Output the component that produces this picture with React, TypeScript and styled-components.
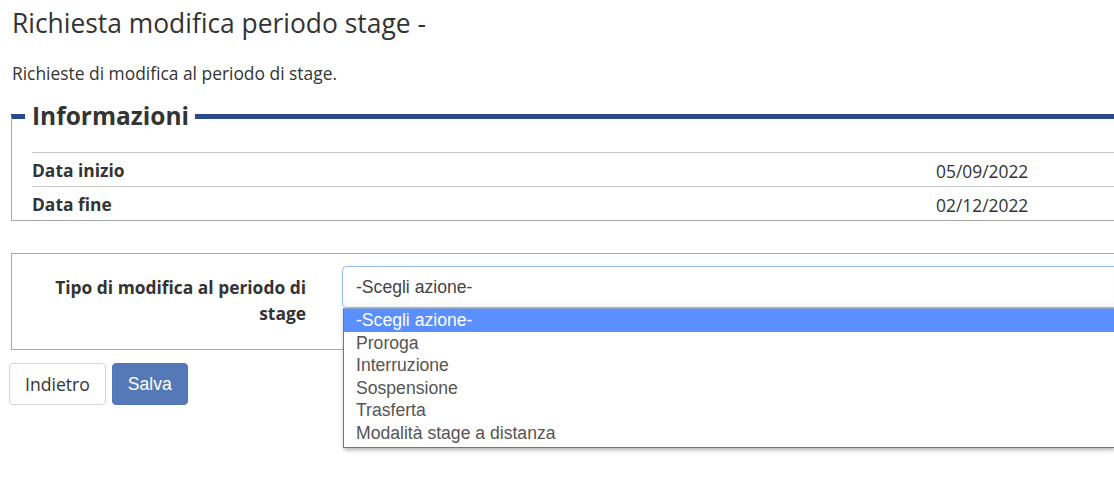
import React from 'react'
import styled, { createGlobalStyle } from 'styled-components'

const GlobalStyle = createGlobalStyle`
  html, body {
    margin: 0;
    padding: 0;
    background: #fff;
    overflow: hidden;
  }
  body {
    font-family: 'Open Sans', 'DejaVu Sans', sans-serif;
    color: #333;
  }
`

const Page = styled.div`
  width: 100%;
  min-height: 498px;
  padding: 0 0 0 11px;
  box-sizing: border-box;
`
const Title = styled.h1`
  margin: 0;
  padding: 5px 0 0 1px;
  font-size: 26.4px;
  font-weight: 400;
  line-height: 36px;
  color: #333;
`
const Intro = styled.p`
  margin: 20px 0 0 1px;
  font-size: 17.4px;
  line-height: 24px;
`
const InfoFieldset = styled.fieldset`
  margin: 16px 0 0;
  padding: 0 0 0 20px;
  border: 1px solid #a9a9a9;
  border-top: 5px solid #2b4a8b;
  border-right: none;
`
const InfoLegend = styled.legend`
  margin-left: -7px;
  padding: 0 6px 0 7px;
  font-size: 24.5px;
  font-weight: 700;
  line-height: 30px;
  color: #333;
`
const InfoTable = styled.div`
  margin-top: 21px;
`
const InfoRow = styled.div`
  display: grid;
  grid-template-columns: 904px 1fr;
  align-items: center;
  height: 33px;
  border-top: 1px solid #c8c8c8;
  font-size: 17.4px;
`
const InfoLabel = styled.div`
  font-weight: 700;
`
const InfoValue = styled.div`
  font-weight: 400;
  padding-top: 3px;
`
const FormBox = styled.div`
  margin-top: 32px;
  border: 1px solid #a9a9a9;
  border-right: none;
  display: grid;
  grid-template-columns: 294px 1fr;
  column-gap: 36px;
  padding: 12px 0 23px;
`
const FieldLabel = styled.label`
  text-align: right;
  font-weight: 700;
  font-size: 17.4px;
  line-height: 26px;
  padding: 8px 0 0 30px;
`
const SelectWrap = styled.div`
  position: relative;
`
const SelectBox = styled.div`
  height: 42px;
  box-sizing: border-box;
  border: 1px solid #9dbdec;
  border-right: none;
  border-radius: 5px 0 0 5px;
  box-shadow: inset 0 -6px 8px -6px rgba(0, 0, 0, 0.08), 0 0 3px rgba(102, 153, 230, 0.25);
  padding: 0 13px;
  display: flex;
  align-items: center;
  font-family: 'Liberation Sans', Arial, sans-serif;
  font-size: 17.6px;
  color: #444;
`
const OptionList = styled.ul`
  position: absolute;
  left: 1px;
  right: 0;
  top: 42px;
  margin: 0;
  padding: 0 0 2px;
  list-style: none;
  background: #fff;
  border: 1px solid #767676;
  border-top: 1px solid #8aa9d8;
  border-right: none;
  box-shadow: 1px 2px 4px rgba(0, 0, 0, 0.3);
  font-family: 'Liberation Sans', Arial, sans-serif;
  font-size: 17.6px;
  z-index: 2;
`
const OptionItem = styled.li<{ $active?: boolean }>`
  height: 22.6px;
  line-height: 22.6px;
  padding: 0 12px;
  background: ${(p) => (p.$active ? '#5b8ffd' : 'transparent')};
  color: ${(p) => (p.$active ? '#fff' : '#555')};
  white-space: nowrap;
`
const Actions = styled.div`
  display: flex;
  gap: 6px;
  margin: 13px 0 0 -2px;
`
const Button = styled.button<{ $primary?: boolean }>`
  height: 42px;
  padding: 0 ${(p) => (p.$primary ? '15px' : '15px')};
  border-radius: 4px;
  border: 1px solid ${(p) => (p.$primary ? '#4f74b0' : '#d6d6d6')};
  background: ${(p) => (p.$primary ? '#5479b6' : '#fff')};
  color: ${(p) => (p.$primary ? '#fff' : '#333')};
  font-family: ${(p) =>
    p.$primary ? "'Liberation Sans', Arial, sans-serif" : "'Open Sans', sans-serif"};
  font-size: 17.6px;
  cursor: pointer;
`

const infoRows = [
  { label: 'Data inizio', value: '05/09/2022' },
  { label: 'Data fine', value: '02/12/2022' },
]

const options = [
  '-Scegli azione-',
  'Proroga',
  'Interruzione',
  'Sospensione',
  'Trasferta',
  'Modalità stage a distanza',
]

const App: React.FC = () => {
  return (
    <Page>
      <GlobalStyle />
      <Title>Richiesta modifica periodo stage -</Title>
      <Intro>Richieste di modifica al periodo di stage.</Intro>
      <InfoFieldset>
        <InfoLegend>Informazioni</InfoLegend>
        <InfoTable>
          {infoRows.map((row) => (
            <InfoRow key={row.label}>
              <InfoLabel>{row.label}</InfoLabel>
              <InfoValue>{row.value}</InfoValue>
            </InfoRow>
          ))}
        </InfoTable>
      </InfoFieldset>
      <FormBox>
        <FieldLabel>Tipo di modifica al periodo di stage</FieldLabel>
        <SelectWrap>
          <SelectBox>-Scegli azione-</SelectBox>
          <OptionList>
            {options.map((opt, i) => (
              <OptionItem key={opt} $active={i === 0}>
                {opt}
              </OptionItem>
            ))}
          </OptionList>
        </SelectWrap>
      </FormBox>
      <Actions>
        <Button>Indietro</Button>
        <Button $primary>Salva</Button>
      </Actions>
    </Page>
  )
}

export default App
